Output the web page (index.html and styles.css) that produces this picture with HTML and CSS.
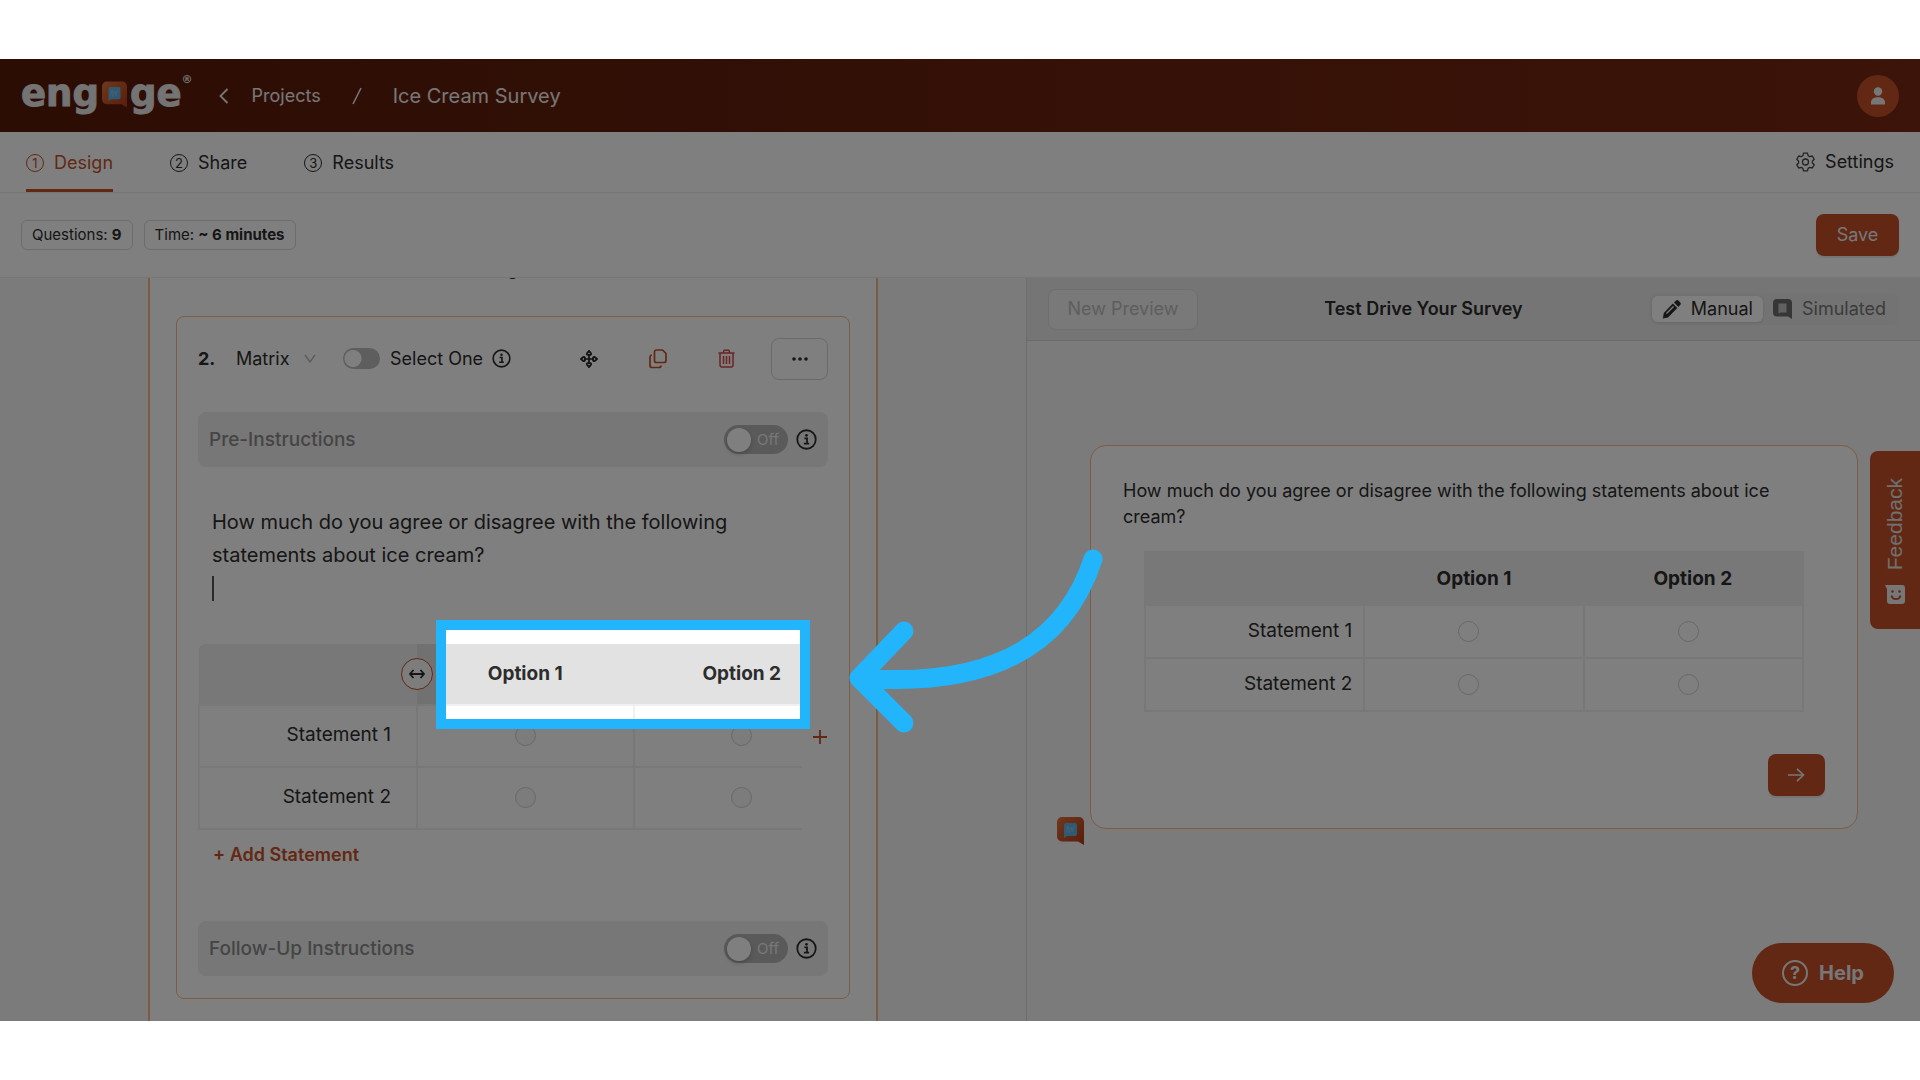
FILE: index.html
```html
<!DOCTYPE html>
<html lang="en">
<head>
<meta charset="utf-8">
<title>Ice Cream Survey</title>
<link rel="stylesheet" href="styles.css">
</head>
<body>
<svg class="defs" aria-hidden="true">
  <defs>
    <linearGradient id="brand" x1="0" y1="0" x2="1" y2="1">
      <stop offset="0" stop-color="#e07038"/><stop offset="1" stop-color="#b03a18"/>
    </linearGradient>
    <symbol id="bubble" viewBox="0 0 27 28">
      <path d="M5 0h17a5 5 0 0 1 5 5v23l-6-3.500H5a5 5 0 0 1-5-5V5a5 5 0 0 1 5-5z" fill="url(#brand)"/>
      <path d="M8.500 6h9.500a2 2 0 0 1 2 2v9a2 2 0 0 1-2 2h-8l-3 2V8a2 2 0 0 1 1.500-2z" fill="#62b4e4"/>
      <path d="M9 16l2-7 1 7 2-6 1 5 2-6M9 10l3 2 5-1" fill="none" stroke="#7cc2ea"/>
    </symbol>
    <symbol id="info" viewBox="0 0 20 20">
      <circle cx="10" cy="10" r="8.800" fill="none" stroke="#2c2c2c" stroke-width="1.700"/>
      <path d="M8 9h2.500v5M7.500 14h5" fill="none" stroke="#2c2c2c" stroke-width="1.700"/>
      <circle cx="10" cy="6" r="1.300" fill="#2c2c2c"/>
    </symbol>
  </defs>
</svg>

<div class="app">
  <header class="topbar">
    <a class="logo" href="#" aria-label="engage"><span>eng</span><svg class="logo-mark"><use href="#bubble"/></svg><span>ge</span><sup>®</sup></a>
    <nav class="crumbs" aria-label="Breadcrumb">
      <svg width="10" height="18" viewBox="0 0 10 18"><path d="M8.500 2L1.500 9l7 7" fill="none" stroke="#eee" stroke-width="1.800"/></svg>
      <a href="#">Projects</a>
      <svg class="slash" width="10" height="18" viewBox="0 0 10 18"><path d="M9 1L1 17" stroke="#eee" stroke-width="1.600"/></svg>
      <span class="current">Ice Cream Survey</span>
    </nav>
    <button class="avatar" aria-label="Account"><svg width="16" height="18" viewBox="0 0 16 18" fill="#eee"><circle cx="8" cy="4.500" r="4.200"/><path d="M1 17.500v-2C1 12 4 10.300 8 10.300s7 1.700 7 5.200v2z"/></svg></button>
  </header>

  <nav class="tabs">
    <a class="tab active" href="#"><span class="num">1</span>Design</a>
    <a class="tab" href="#"><span class="num">2</span>Share</a>
    <a class="tab" href="#"><span class="num">3</span>Results</a>
    <a class="settings" href="#"><svg width="19" height="20" viewBox="0 0 19 20" fill="none" stroke="#444" stroke-width="1.300" stroke-linejoin="round"><path d="M7.500 1.200h4l.6 2.500 1.700 1 2.500-.7 1.900 3.300-1.800 1.800v1.900l1.800 1.800-1.900 3.200-2.500-.6-1.700 1-.6 2.400h-4l-.6-2.400-1.700-1-2.500.6L.8 12.800 2.600 11V9.100L.8 7.300 2.700 4l2.500.7 1.700-1z"/><circle cx="9.500" cy="10" r="3"/></svg>Settings</a>
  </nav>

  <div class="toolbar">
    <span class="tag">Questions: <b>9</b></span>
    <span class="tag">Time: <b>~ 6 minutes</b></span>
    <button class="primary save">Save</button>
  </div>

  <main class="panes">
    <section class="editor">
      <div class="sheet">
        <p class="scrolled">g</p>
        <article class="question">
          <div class="question-bar">
            <strong>2.</strong>
            <span class="kind"><select aria-label="Question type"><option>Matrix</option></select><svg width="12" height="9" viewBox="0 0 12 9"><path d="M1 1l5 7 5-7" fill="none" stroke="#b4b4b4" stroke-width="1.300"/></svg></span>
            <label class="one"><input class="switch" type="checkbox">Select One</label>
            <svg class="info-sm"><use href="#info"/></svg>
            <div class="actions">
              <button class="icon" aria-label="Move"><svg width="18" height="18" viewBox="0 0 18 18" fill="none" stroke="#222" stroke-width="1.700" stroke-linejoin="round"><path d="M9 4v10M4 9h10M9 .9l2 2.500a1 1 0 0 1-.8 1.600H7.800A1 1 0 0 1 7 3.400zM9 17.100l2-2.500a1 1 0 0 0-.8-1.600H7.800a1 1 0 0 0-.8 1.600zM.9 9l2.500-2A1 1 0 0 1 5 7.800v2.400a1 1 0 0 1-1.600.8zM17.100 9l-2.500-2a1 1 0 0 0-1.600.8v2.400a1 1 0 0 0 1.600.8z"/></svg></button>
              <button class="icon" aria-label="Duplicate"><svg width="18" height="20" viewBox="0 0 18 20" fill="none" stroke="#c45028" stroke-width="1.700" stroke-linejoin="round"><path d="M7.500 1h6L17 4.500v7a2 2 0 0 1-2 2H7.500a2 2 0 0 1-2-2V3a2 2 0 0 1 2-2zM3 6a2 2 0 0 0-2 2v8.500a2 2 0 0 0 2 2h7a2 2 0 0 0 2-2"/></svg></button>
              <button class="icon" aria-label="Delete"><svg width="17" height="19" viewBox="0 0 17 19" fill="none" stroke="#d84848" stroke-width="1.500"><path d="M.5 4h16M5 4l1.200-2.700h4.600L12 4M2 4v12a2 2 0 0 0 2 2h9a2 2 0 0 0 2-2V4M5.500 7v8M8.500 7v8M11.500 7v8"/></svg></button>
              <button class="more" aria-label="More"><svg width="16" height="4" viewBox="0 0 16 4" fill="#2c2c2c"><circle cx="2" cy="2" r="1.800"/><circle cx="8" cy="2" r="1.800"/><circle cx="14" cy="2" r="1.800"/></svg></button>
            </div>
          </div>

          <div class="instructions">
            <span>Pre-Instructions</span>
            <label class="toggle"><input type="checkbox" aria-label="Pre-Instructions"><i></i>Off</label>
            <svg class="info-md"><use href="#info"/></svg>
          </div>

          <div class="prompt">
            <textarea rows="3" aria-label="Question text">How much do you agree or disagree with the following statements about ice cream?</textarea>
            <i class="caret"></i>
          </div>

          <div class="matrix-row">
            <div class="matrix-box">
              <table class="matrix">
                <thead><tr><th><button class="resize" aria-label="Resize column"><svg width="16" height="10" viewBox="0 0 16 10" fill="none" stroke="#2c2c2c" stroke-width="1.800"><path d="M1 5h14M4.500 1L1 5l3.500 4M11.500 1L15 5l-3.500 4"/></svg></button></th><th>Option 1</th><th>Option 2</th></tr></thead>
                <tbody>
                  <tr><td>Statement 1</td><td><input type="radio" name="e1" disabled aria-label="Option 1"></td><td><input type="radio" name="e1" disabled aria-label="Option 2"></td></tr>
                  <tr><td>Statement 2</td><td><input type="radio" name="e2" disabled aria-label="Option 1"></td><td><input type="radio" name="e2" disabled aria-label="Option 2"></td></tr>
                </tbody>
              </table>
            </div>
            <button class="add-col" aria-label="Add option"><svg width="16" height="16" viewBox="0 0 16 16"><path d="M8 1v14M1 8h14" stroke="#c45028" stroke-width="1.800"/></svg></button>
          </div>
          <button class="add-row">+ Add Statement</button>

          <div class="instructions">
            <span>Follow-Up Instructions</span>
            <label class="toggle"><input type="checkbox" aria-label="Follow-Up Instructions"><i></i>Off</label>
            <svg class="info-md"><use href="#info"/></svg>
          </div>
        </article>
      </div>
    </section>

    <section class="preview">
      <div class="preview-bar">
        <button class="new-preview" disabled>New Preview</button>
        <h2>Test Drive Your Survey</h2>
        <div class="modes">
          <label class="mode on"><input type="radio" name="mode" checked><svg width="19" height="19" viewBox="0 0 19 19"><path d="M12 2.500l1.800-1.700a2 2 0 0 1 2.800 0l1.500 1.500a2 2 0 0 1 0 2.800L16.400 7z" fill="#2c2c2c"/><path d="M10.800 3.600l4.500 4.500L6 17.400.8 18.500 1.800 13z" fill="#2c2c2c"/><path d="M4.500 13.500l7-7" stroke="#fff" stroke-width="1.200"/></svg>Manual</label>
          <label class="mode"><input type="radio" name="mode"><svg width="19" height="20" viewBox="0 0 19 20"><path d="M4 0h11a4 4 0 0 1 4 4v16l-4-2.500H4a4 4 0 0 1-4-4V4a4 4 0 0 1 4-4z" fill="#6c6c6c"/><path d="M5.500 4.500h8v9h-6l-2 1z" fill="#c4c4c4"/></svg>Simulated</label>
        </div>
      </div>
      <div class="stage">
        <svg class="bot"><use href="#bubble"/></svg>
        <article class="card">
          <p>How much do you agree or disagree with the following statements about ice cream?</p>
          <table class="answers">
            <thead><tr><th></th><th>Option 1</th><th>Option 2</th></tr></thead>
            <tbody>
              <tr><td>Statement 1</td><td><input type="radio" name="p1" aria-label="Option 1"></td><td><input type="radio" name="p1" aria-label="Option 2"></td></tr>
              <tr><td>Statement 2</td><td><input type="radio" name="p2" aria-label="Option 1"></td><td><input type="radio" name="p2" aria-label="Option 2"></td></tr>
            </tbody>
          </table>
          <button class="primary next" aria-label="Next"><svg width="17" height="14" viewBox="0 0 17 14" fill="none" stroke="#eee" stroke-width="1.600"><path d="M0 7h16M9 .8L15.500 7 9 13.200"/></svg></button>
        </article>
      </div>
    </section>
  </main>

  <button class="feedback"><svg width="20" height="19" viewBox="0 0 20 19"><path d="M0 0h17a3 3 0 0 1 3 3v13a3 3 0 0 1-3 3H5a3 3 0 0 1-3-3V4z" fill="#eee"/><path d="M6.500 10.500a4.600 4.600 0 0 0 9 0" fill="none" stroke="#c45028" stroke-width="1.800"/><circle cx="7.500" cy="6.500" r="1.300" fill="#c45028"/><circle cx="14.500" cy="6.500" r="1.300" fill="#c45028"/></svg><span>Feedback</span></button>
  <button class="help"><span class="qmark">?</span>Help</button>

  <div class="spotlight"></div>
  <svg class="arrow" width="270" height="200" viewBox="0 0 270 200" fill="none" stroke="#22b5fb" stroke-width="19" stroke-linecap="round" stroke-linejoin="round"><path d="M253 19C230 90 170 150 19 138M64 91L19 138l45 45"/></svg>
</div>
</body>
</html>
```
FILE: styles.css
```css
* { box-sizing: border-box; }

body {
  margin: 0;
  padding: 59px 0;
  height: 100vh;
  display: flex;
  background: #fff;
  color: #2c2c2c;
  font: 18px/26px Inter, "Open Sans", sans-serif;
}

button, select, textarea { font: inherit; color: inherit; }
button { cursor: pointer; padding: 0; border: 0; background: none; }
a { color: inherit; text-decoration: none; }
svg { flex: none; }
.defs { position: absolute; width: 0; height: 0; }

.app {
  position: relative;
  flex: 1;
  min-width: 0;
  display: flex;
  flex-direction: column;
  overflow: hidden;
  background: #fff;
}

/* Top bar */
.topbar {
  flex: none;
  height: 73px;
  padding: 0 21px;
  display: flex;
  align-items: center;
  background: linear-gradient(90deg, #581a08, #782812);
  color: #eee;
}
.logo {
  display: flex;
  align-items: center;
  gap: 3px;
  padding-bottom: 3px;
  font: bold 37px/48px "DejaVu Sans", sans-serif;
  color: #e8e8e8;
  -webkit-text-stroke: 1px #e8e8e8;
}
.logo-mark { width: 25px; height: 27px; }
.logo sup { align-self: flex-start; width: 8px; margin-left: -3px; font-size: 11px; line-height: 20px; -webkit-text-stroke: 0; }
.crumbs { display: flex; align-items: center; gap: 23px; margin-left: 29px; }
.slash { margin: 0 8px; }
.current { font-size: 20px; }
.avatar {
  width: 42px;
  height: 42px;
  margin-left: auto;
  border-radius: 50%;
  background: #c45028;
  display: grid;
  place-items: center;
}

/* Tabs */
.tabs {
  flex: none;
  height: 61px;
  padding: 0 26px;
  display: flex;
  gap: 57px;
  border-bottom: 1px solid #ececec;
}
.tab { display: flex; align-items: center; gap: 10px; padding-top: 4px; border-bottom: 3px solid transparent; }
.tab.active { color: #c45028; border-color: #c45028; }
.num {
  width: 18px;
  height: 18px;
  border: 1px solid currentColor;
  border-radius: 50%;
  font-size: 13px;
  line-height: 16px;
  text-align: center;
}
.settings { display: flex; align-items: center; gap: 10px; margin-left: auto; }

/* Summary toolbar */
.toolbar {
  flex: none;
  height: 85px;
  padding: 0 21px;
  display: flex;
  align-items: center;
  gap: 11px;
  border-bottom: 1px solid #ececec;
}
.tag {
  padding: 1px 10px;
  border: 1px solid #d9d9d9;
  border-radius: 6px;
  font-size: 15px;
}
.tag b { font-weight: 700; }
.primary {
  height: 42px;
  border-radius: 8px;
  background: #c45028;
  color: #eee;
  box-shadow: 0 2px 1px rgba(0, 0, 0, .08);
}
.save { width: 83px; margin-left: auto; }

/* Panes */
.panes {
  flex: 1;
  min-height: 0;
  display: grid;
  grid-template-columns: minmax(0, 1026fr) minmax(0, 894fr);
  overflow: hidden;
  background: #f6f6f6;
}
.editor { display: flex; justify-content: center; align-items: flex-start; overflow: hidden; }
.sheet {
  width: 730px;
  padding: 0 26px 60px;
  border: solid #f8b884;
  border-width: 0 2px;
  background: #fff;
}
.scrolled { height: 48px; margin: -10px 0 0 331px; line-height: 1px; }
.question {
  padding: 20px 21px 22px;
  border: 1px solid #f8b884;
  border-radius: 8px;
}
.question-bar { display: flex; align-items: center; height: 43px; margin-bottom: 32px; }
.question-bar strong { font-weight: 700; width: 38px; }
.kind { display: flex; align-items: center; width: 107px; }
.kind select { appearance: none; border: 0; background: none; padding: 0; width: 68px; }
.one { display: flex; align-items: center; gap: 10px; }
.switch {
  appearance: none;
  width: 37px;
  height: 21px;
  margin: 0;
  border-radius: 11px;
  background: radial-gradient(circle at 10px 50%, #fff 8px, transparent 9px), #bcbcbc;
}
.info-sm { width: 19px; height: 19px; margin-left: 9px; }
.actions { margin-left: auto; display: flex; align-items: center; }
.icon { width: 69px; height: 42px; display: grid; place-items: center; }
.more {
  width: 57px;
  height: 42px;
  margin-left: 10px;
  border: 1px solid #d4d4d4;
  border-radius: 8px;
  display: grid;
  place-items: center;
}

.instructions {
  height: 55px;
  padding: 0 11px;
  display: flex;
  align-items: center;
  gap: 8px;
  border-radius: 8px;
  background: #eee;
  color: #8a8a8a;
  font-size: 19px;
  font-weight: 500;
}
.toggle {
  width: 64px;
  height: 29px;
  padding: 0 3px;
  margin-left: auto;
  display: flex;
  align-items: center;
  gap: 6px;
  border-radius: 15px;
  background: #b4b4b4;
  color: #eee;
  font-size: 15px;
  font-weight: 400;
}
.toggle input { appearance: none; margin: 0; position: absolute; }
.toggle i { width: 24px; height: 24px; border-radius: 50%; background: #fff; box-shadow: 0 2px 4px rgba(0, 0, 0, .2); }
.info-md { width: 21px; height: 21px; }

.prompt { position: relative; margin: 39px 0 39px 14px; }
.prompt textarea {
  display: block;
  width: 100%;
  height: 99px;
  padding: 0;
  border: 0;
  outline: 0;
  resize: none;
  overflow: hidden;
  background: none;
  font-size: 20px;
  line-height: 33px;
}
.caret { position: absolute; left: 0; bottom: 4px; width: 2px; height: 25px; background: #555; }

.matrix-row { display: flex; align-items: center; gap: 10px; }
.matrix-box { flex: 1; min-width: 0; overflow: hidden; border-radius: 8px 0 0 0; }
table { border-collapse: collapse; table-layout: fixed; font-size: 19px; }
th { font-weight: 700; background: #f0f0f0; }
td { text-align: center; border: 2px solid #f0f0f0; }
td:first-child { text-align: right; }
.matrix { width: 653px; }
.matrix th { height: 61px; border: 0; padding: 0; }
.matrix th + th { background: #e2e2e2; }
.matrix th:first-child { width: 218px; }
.matrix td { height: 62px; padding: 0 0 3px; }
.matrix td:first-child { padding-right: 25px; }
.resize {
  position: relative;
  left: 202px;
  width: 32px;
  height: 32px;
  display: grid;
  place-items: center;
  border: 1px solid #c45028;
  border-radius: 50%;
  background: #fafafa;
}
td input {
  appearance: none;
  display: inline-block;
  vertical-align: middle;
  width: 21px;
  height: 21px;
  margin: 0;
  border: 1px solid #d0d0d0;
  border-radius: 50%;
  background: #fff;
}
td input:disabled { background: #f8f8f8; }
.add-col { width: 16px; height: 16px; display: grid; place-items: center; }
.add-row { display: block; margin: 12px 0 53px 15px; color: #c45028; font-weight: 600; }

/* Preview */
.preview { display: flex; flex-direction: column; border-left: 1px solid #d9d9d9; }
.preview-bar {
  height: 63px;
  padding: 0 21px;
  display: flex;
  justify-content: space-between;
  align-items: center;
  background: #ebebeb;
  border-bottom: 1px solid #d9d9d9;
}
.new-preview {
  width: 150px;
  height: 41px;
  border: 1px solid #dcdcdc;
  border-radius: 8px;
  background: #f2f2f2;
  color: #bcbcbc;
}
.preview-bar h2 { margin: 0; font-size: 18px; font-weight: 600; }
.modes {
  display: flex;
  padding: 3px;
  border-radius: 8px;
  background: #e6e6e6;
}
.mode { display: flex; align-items: center; gap: 10px; padding: 0 10px; border-radius: 6px; color: #787878; }
.mode.on { background: #fff; color: #2c2c2c; box-shadow: 0 1px 3px rgba(0, 0, 0, .1); }
.mode input { appearance: none; margin: 0; position: absolute; }
.stage { display: flex; align-items: flex-end; gap: 6px; padding: 104px 62px 0 30px; }
.bot { width: 27px; height: 28px; margin-bottom: -16px; }
.card {
  flex: 1;
  min-width: 0;
  padding: 32px;
  border: 1px solid #f8b884;
  border-radius: 16px;
  background: #fff;
}
.card p { margin: 0 0 21px; }
.answers { width: calc(100% - 42px); margin: 0 21px; border: 2px solid #f0f0f0; }
.answers th { height: 53px; padding: 0; border: 0; }
.answers td { height: 53px; padding: 0 20px 2px 10px; }
.answers td:first-child { padding-right: 11px; }
.next { width: 57px; margin: 42px 0 0 auto; display: grid; place-items: center; }

/* Floating buttons */
.feedback {
  position: absolute;
  right: 0;
  top: 392px;
  width: 50px;
  height: 178px;
  padding-top: 2px;
  display: flex;
  flex-direction: column-reverse;
  align-items: center;
  justify-content: center;
  gap: 14px;
  border-radius: 8px 0 0 8px;
  background: #c45028;
  color: #e0e0e0;
}
.feedback span { writing-mode: vertical-rl; rotate: 180deg; font: 21px/24px "Liberation Sans", Arial, sans-serif; }
.help {
  position: absolute;
  right: 26px;
  bottom: 18px;
  width: 142px;
  height: 60px;
  display: flex;
  align-items: center;
  justify-content: center;
  gap: 11px;
  border-radius: 30px;
  background: #c45028;
  color: #eee;
  font-size: 20px;
  font-weight: 700;
}
.qmark { width: 26px; height: 26px; border: 2px solid #eee; border-radius: 50%; font-size: 18px; line-height: 22px; }

/* Tutorial callout: dims all but the framed cells */
.spotlight {
  position: absolute;
  left: 446px;
  top: 571px;
  width: 354px;
  height: 89px;
  outline: 10px solid #22b5fb;
  box-shadow: 0 0 0 2400px rgba(0, 0, 0, .5);
}
.arrow { position: absolute; left: 840px; top: 481px; }
```
